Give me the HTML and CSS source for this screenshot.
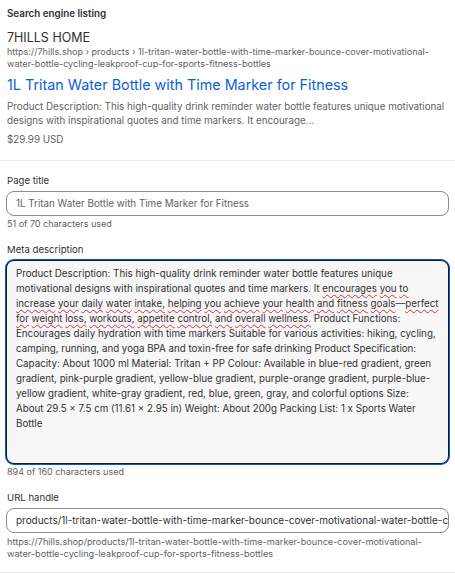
FILE: index.html
```html
<!DOCTYPE html>
<html lang="en">
<head>
<meta charset="utf-8">
<title>Search engine listing</title>
<link rel="stylesheet" href="styles.css">
</head>
<body>
<div class="card">
  <section class="preview">
    <h2 class="heading">Search engine listing</h2>
    <div class="brand">7HILLS HOME</div>
    <div class="crumb">https://7hills.shop › products › 1l-tritan-water-bottle-with-time-marker-bounce-cover-motivational-water-bottle-cycling-leakproof-cup-for-sports-fitness-bottles</div>
    <div class="title-link">1L Tritan Water Bottle with Time Marker for Fitness</div>
    <div class="snippet">Product Description: This high-quality drink reminder water bottle features unique motivational designs with inspirational quotes and time markers. It encourage...</div>
    <div class="price">$29.99 USD</div>
  </section>
  <section class="form">
    <div class="field">
      <label class="label">Page title</label>
      <div class="input">1L Tritan Water Bottle with Time Marker for Fitness</div>
      <div class="help">51 of 70 characters used</div>
    </div>
    <div class="field">
      <label class="label">Meta description</label>
      <div class="textarea">Product Description: This high-quality drink reminder water bottle features unique motivational designs with inspirational quotes and time markers. It <span class="sq">encourages</span> <span class="sq">you</span> <span class="sq">to</span> <span class="sq">increase</span> <span class="sq">your</span> <span class="sq">daily</span> <span class="sq">water</span> <span class="sq">intake,</span> <span class="sq">helping</span> <span class="sq">you</span> <span class="sq">achieve</span> <span class="sq">your</span> <span class="sq">health</span> <span class="sq">and</span> <span class="sq">fitness</span> <span class="sq">goals</span>—<span class="sq">perfect</span> <span class="sq">for</span> <span class="sq">weight</span> <span class="sq">loss,</span> <span class="sq">workouts,</span> <span class="sq">appetite</span> <span class="sq">control,</span> <span class="sq">and</span> <span class="sq">overall</span> <span class="sq">wellness.</span> Product Functions: Encourages daily hydration with time markers Suitable for various activities: hiking, cycling, camping, running, and yoga BPA and toxin-free for safe drinking Product Specification: Capacity: About 1000 ml Material: Tritan + PP Colour: Available in blue-red gradient, green gradient, pink-purple gradient, yellow-blue gradient, purple-orange gradient, purple-blue-yellow gradient, white-gray gradient, red, blue, green, gray, and colorful options Size: About 29.5 × 7.5 cm (11.61 × 2.95 in) Weight: About 200g Packing List: 1 x Sports Water Bottle</div>
      <div class="help">894 of 160 characters used</div>
    </div>
    <div class="field">
      <label class="label">URL handle</label>
      <div class="input url">products/1l-tritan-water-bottle-with-time-marker-bounce-cover-motivational-water-bottle-cycling-leakproof-cup-for-sports-fitness-bottles</div>
      <div class="help url-help">https://7hills.shop/products/1l-tritan-water-bottle-with-time-marker-bounce-cover-motivational-water-bottle-cycling-leakproof-cup-for-sports-fitness-bottles</div>
    </div>
  </section>
</div>
</body>
</html>
```

FILE: styles.css
```css
html, body {
  margin: 0;
  padding: 0;
  background: #f1f1f1;
}
body {
  font-family: Inter, "Noto Sans", sans-serif;
  color: #303030;
}
.card {
  background: #ffffff;
  border-bottom: 1px solid #e3e3e3;
}
.preview {
  padding: 6px 7px 13px;
  border-bottom: 1px solid #ebebeb;
}
.heading {
  margin: 0;
  font-size: 9.8px;
  line-height: 16px;
  font-weight: 600;
  color: #303030;
}
.brand {
  margin-top: 8px;
  font-size: 12.5px;
  line-height: 16px;
  color: #303030;
}
.crumb {
  font-size: 9.05px;
  line-height: 12px;
  color: #616161;
}
.title-link {
  margin-top: 5px;
  font-size: 14.35px;
  line-height: 20px;
  color: #0b5fd6;
}
.snippet {
  margin-top: 5px;
  font-size: 9.8px;
  line-height: 14px;
  color: #616161;
}
.price {
  margin-top: 5px;
  font-size: 9.8px;
  line-height: 14px;
  color: #616161;
}
.form {
  padding: 13px 6px 12px;
  display: flex;
  flex-direction: column;
  gap: 12px;
}
.field {
  display: flex;
  flex-direction: column;
}
.label {
  display: block;
  font-size: 9.6px;
  line-height: 14px;
  color: #303030;
  margin-bottom: 3px;
  padding-left: 1px;
}
.input {
  height: 23px;
  line-height: 23px;
  border: 1px solid #8a8a8a;
  border-radius: 8px;
  padding: 0 9px;
  font-size: 9.8px;
  color: #616161;
  white-space: nowrap;
  overflow: hidden;
  background: #ffffff;
}
.input.url {
  font-size: 9.95px;
  color: #303030;
}
.help {
  font-size: 9px;
  line-height: 14px;
  color: #616161;
  margin-top: 1px;
  padding-left: 1px;
}
.url-help {
  font-size: 9.15px;
  line-height: 12px;
  margin-top: 3px;
}
.textarea {
  height: 192px;
  border: 1px solid #1a1a1a;
  box-shadow: 0 0 0 1px #005bd3;
  border-radius: 8px;
  padding: 5px 9px 5px 9px;
  background: #f7f7f7;
  font-size: 9.75px;
  line-height: 15px;
  color: #303030;
}
.sq {
  text-decoration: underline wavy #e22c2c;
  text-decoration-thickness: 1px;
  text-underline-offset: 2px;
  text-decoration-skip-ink: none;
}
```
